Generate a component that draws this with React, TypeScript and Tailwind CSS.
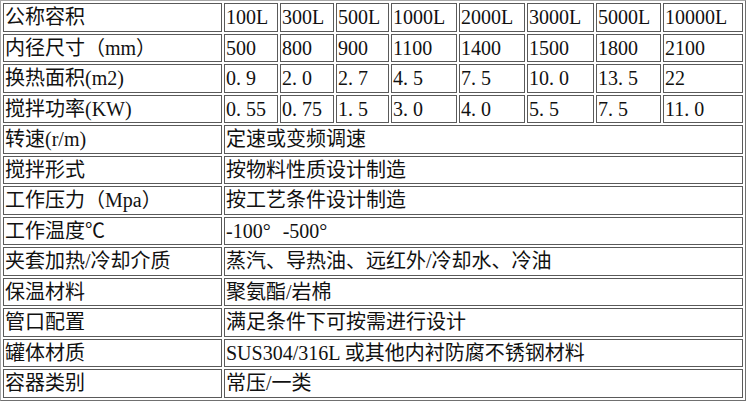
const sizes = ["100L", "300L", "500L", "1000L", "2000L", "3000L", "5000L", "10000L"];

// 四行按容积分列的参数
const specRows: { label: string; values: string[] }[] = [
  { label: "内径尺寸（mm）", values: ["500", "800", "900", "1100", "1400", "1500", "1800", "2100"] },
  { label: "换热面积(m2)", values: ["0.9", "2.0", "2.7", "4.5", "7.5", "10.0", "13.5", "22"] },
  { label: "搅拌功率(KW)", values: ["0.55", "0.75", "1.5", "3.0", "4.0", "5.5", "7.5", "11.0"] },
];

// 通用参数，整行合并
const commonRows: { label: string; value: React.ReactNode }[] = [
  { label: "转速(r/m)", value: "定速或变频调速" },
  { label: "搅拌形式", value: "按物料性质设计制造" },
  { label: "工作压力（Mpa）", value: "按工艺条件设计制造" },
  { label: "工作温度℃", value: <Deg text="-100°-500°" /> },
  { label: "夹套加热/冷却介质", value: "蒸汽、导热油、远红外/冷却水、冷油" },
  { label: "保温材料", value: "聚氨酯/岩棉" },
  { label: "管口配置", value: "满足条件下可按需进行设计" },
  { label: "罐体材质", value: "SUS304/316L 或其他内衬防腐不锈钢材料" },
  { label: "容器类别", value: "常压/一类" },
];

const colWidths = ["w-[219px]", "w-[54px]", "w-[54px]", "w-[53px]", "w-[66px]", "w-[66px]", "w-[67px]", "w-[65px]", "w-[80px]"];

const cell = "h-[28.5px] border border-[#5a5a5a] px-px py-0 text-left align-middle whitespace-nowrap overflow-hidden";

// 宋体里半角字符都是半个字宽，这里把小数点单独撑开
function Num({ text }: { text: string }) {
  const parts = text.split(".");
  if (parts.length < 2) return <>{text}</>;
  return (
    <>
      {parts[0]}
      <span className="inline-block w-[10px]">.</span>
      {parts[1]}
    </>
  );
}

function Deg({ text }: { text: string }) {
  const parts = text.split("°");
  return (
    <>
      {parts.map((p, i) => (
        <span key={i}>
          {p}
          {i < parts.length - 1 && <span className="inline-block w-[20px]">°</span>}
        </span>
      ))}
    </>
  );
}

export default function App() {
  return (
    <div className="bg-white w-[750px] h-[404px] text-[20px] leading-none text-[#111] font-['Liberation_Serif','Noto_Sans_CJK_SC',serif]">
      <table className="table-fixed w-[746px] border-separate border-spacing-[2px] border border-t-[#a8a8a8] border-l-[#a8a8a8] border-r-[#707070] border-b-[#707070]">
        <tbody>
          <tr>
            <td className={`${cell} ${colWidths[0]}`}>公称容积</td>
            {sizes.map((s, i) => (
              <td key={s} className={`${cell} ${colWidths[i + 1]}`}>
                {s}
              </td>
            ))}
          </tr>
          {specRows.map((r) => (
            <tr key={r.label}>
              <td className={cell}>{r.label}</td>
              {r.values.map((v, i) => (
                <td key={i} className={cell}>
                  <Num text={v} />
                </td>
              ))}
            </tr>
          ))}
          {commonRows.map((r) => (
            <tr key={r.label}>
              <td className={cell}>{r.label}</td>
              <td colSpan={8} className={cell}>
                {r.value}
              </td>
            </tr>
          ))}
        </tbody>
      </table>
    </div>
  );
}
